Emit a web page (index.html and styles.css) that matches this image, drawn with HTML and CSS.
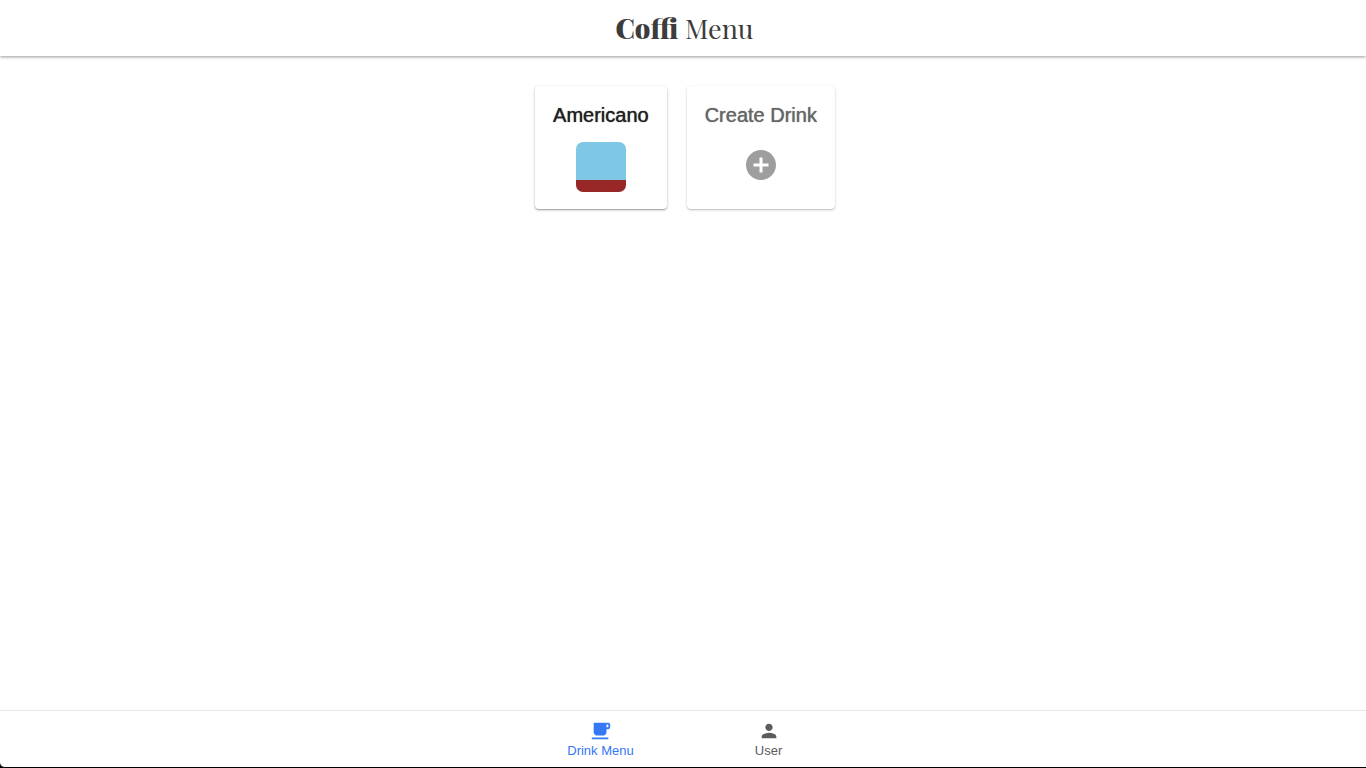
FILE: index.html
```html
<!DOCTYPE html>
<html lang="en">
<head>
<meta charset="utf-8">
<meta name="viewport" content="width=device-width, initial-scale=1">
<title>Coffi Menu</title>
<link rel="stylesheet" href="styles.css">
</head>
<body>
<header class="header">
  <h1 class="title"><strong>Coffi</strong> Menu</h1>
</header>
<main class="menu">
  <button class="card" type="button">
    <span class="card-name">Americano</span>
    <span class="cup"></span>
  </button>
  <button class="card card-create" type="button">
    <span class="card-name">Create Drink</span>
    <svg class="add-icon" viewBox="0 0 24 24" aria-hidden="true"><path d="M12 2C6.48 2 2 6.48 2 12s4.480 10 10 10 10-4.480 10-10S17.520 2 12 2zm5 11h-4v4h-2v-4H7v-2h4V7h2v4h4v2z"/></svg>
  </button>
</main>
<nav class="tabs">
  <a class="tab tab-active" href="#menu" aria-current="page">
    <svg class="tab-icon" viewBox="0 0 24 24" aria-hidden="true"><path d="M20 3H4v10c0 2.210 1.790 4 4 4h6c2.210 0 4-1.790 4-4v-3h2c1.110 0 2-.9 2-2V5c0-1.110-.89-2-2-2zm0 5h-2V5h2v3zM2 21h18v-2H2v2z"/></svg>
    <span>Drink Menu</span>
  </a>
  <a class="tab" href="#user">
    <svg class="tab-icon" viewBox="0 0 24 24" aria-hidden="true"><path d="M12 12c2.210 0 4-1.790 4-4s-1.790-4-4-4-4 1.790-4 4 1.790 4 4 4zm0 2c-2.670 0-8 1.340-8 4v2h16v-2c0-2.660-5.330-4-8-4z"/></svg>
    <span>User</span>
  </a>
</nav>
</body>
</html>
```
FILE: styles.css
```css
* {
  box-sizing: border-box;
}

html {
  background: #000;
}

body {
  display: flex;
  flex-direction: column;
  min-height: 100vh;
  margin: 0;
  border-bottom: 1px solid #000;
  border-bottom-left-radius: 5px;
  background: #fff;
  font-family: "Helvetica Neue", "Liberation Sans", Arial, sans-serif;
}

.header {
  display: flex;
  justify-content: center;
  padding: 12px 0 12px 3px;
  box-shadow: 0 1px 3px rgba(0, 0, 0, 0.4);
}

.title {
  margin: 0;
  color: #3c3c3c;
  font-family: "Playfair Display", "Liberation Serif", serif;
  font-size: 27px;
  font-weight: 400;
  line-height: 32px;
}

.title strong {
  font-weight: 900;
}

.menu {
  display: flex;
  flex: 1;
  flex-wrap: wrap;
  justify-content: center;
  align-items: flex-start;
  gap: 20px;
  padding: 30px 0 30px 4px;
}

.card {
  display: flex;
  flex-direction: column;
  align-items: center;
  gap: 11px;
  height: 123px;
  padding: 13px 18px;
  border: 0;
  border-radius: 4px;
  background: #fff;
  box-shadow: 0 1px 3px rgba(0, 0, 0, 0.25), 0 1px 1px rgba(0, 0, 0, 0.2);
  color: #212121;
  font-family: inherit;
  font-size: 20px;
  line-height: 32px;
  cursor: pointer;
}

.card-name {
  text-shadow: 0 0 1px currentColor;
}

.card-create {
  box-shadow: 0 1px 3px rgba(0, 0, 0, 0.17), 0 1px 1px rgba(0, 0, 0, 0.13);
  color: #666;
}

.cup {
  width: 50px;
  height: 50px;
  border-radius: 7px;
  background: linear-gradient(#7ec8e6 76%, #982828 76%);
}

.add-icon {
  width: 36px;
  height: 36px;
  margin-top: 5px;
  fill: #9e9e9e;
}

.tabs {
  display: flex;
  justify-content: center;
  padding-left: 3px;
  border-top: 1px solid #e9e9e9;
}

.tab {
  display: flex;
  flex-direction: column;
  align-items: center;
  width: 168px;
  padding: 9px 12px 8px;
  color: #5c5c5c;
  font-size: 13px;
  line-height: 17px;
  text-decoration: none;
}

.tab-active {
  color: #3478f6;
}

.tab-icon {
  width: 22px;
  height: 22px;
  fill: currentColor;
}
```
